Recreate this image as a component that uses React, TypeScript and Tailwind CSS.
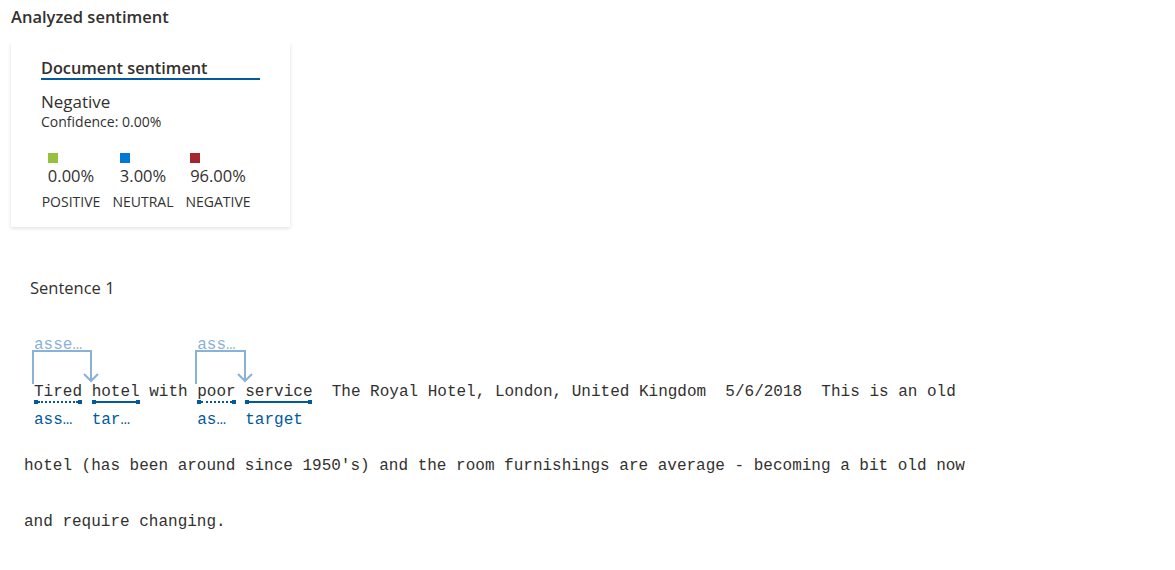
import React from "react";

type Tok = {
  text: string;
  top?: string;
  bottom?: string;
  line?: "solid" | "dotted";
};

const tokens: Tok[] = [
  { text: "Tired", top: "asse…", bottom: "ass…", line: "dotted" },
  { text: " " },
  { text: "hotel", bottom: "tar…", line: "solid" },
  { text: " with " },
  { text: "poor", top: "ass…", bottom: "as…", line: "dotted" },
  { text: " " },
  { text: "service", bottom: "target", line: "solid" },
  { text: "  The Royal Hotel, London, United Kingdom  5/6/2018  This is an old" },
];

function Token({ t }: { t: Tok }) {
  return (
    <div className="flex flex-col whitespace-pre">
      <div className="h-[20px] leading-[20px] text-[#8ab1d6]">{t.top ?? ""}</div>
      <div className="h-[27px]" />
      <div className="h-[19px] leading-[20px] text-[#323130]">{t.text}</div>
      <div className="h-[2px] flex items-center">
        {t.line ? (
          <>
            <div className="w-[4px] h-[4px] bg-[#005a9e] shrink-0" />
            {t.line === "solid" ? (
              <div className="flex-1 h-[2px] bg-[#005a9e]" />
            ) : (
              <div className="flex-1 h-[2px] border-t-2 border-dotted border-[#005a9e]" />
            )}
            <div className="w-[4px] h-[4px] bg-[#005a9e] shrink-0" />
          </>
        ) : null}
      </div>
      <div className="h-[7px]" />
      <div className="h-[20px] leading-[20px] text-[#005a9e]">{t.bottom ?? ""}</div>
    </div>
  );
}

function Arrow({ x1, x2 }: { x1: number; x2: number }) {
  return (
    <g fill="none" stroke="#8ab1d6" strokeWidth="2">
      <path d={`M${x1} 49 V16 H${x2} V46`} />
      <path d={`M${x2 - 7} 39 L${x2} 46 L${x2 + 7} 39`} />
    </g>
  );
}

export default function App() {
  return (
    <div className="w-[1175px] min-h-[570px] bg-white text-[#323130] font-['Open_Sans',sans-serif]">
      <div className="px-[11px] pt-[6px]">
        <h2 className="text-[16.5px] font-semibold leading-[22px]">Analyzed sentiment</h2>
        <div className="mt-[14px] w-[279px] h-[185px] bg-white shadow-[0_1.6px_3.6px_rgba(0,0,0,0.13),0_0.3px_0.9px_rgba(0,0,0,0.11)] pl-[30px] pt-[16px]">
          <div className="w-[219px] border-b-2 border-[#005a9e] text-[16.3px] font-semibold leading-[20px] whitespace-nowrap">
            Document sentiment
          </div>
          <div className="mt-[11px] text-[17px] leading-[22px]">Negative</div>
          <div className="text-[14px] leading-[18px]">Confidence: 0.00%</div>
          <div className="mt-[22px] flex gap-[11px]">
            {[
              { c: "bg-[#95c13e]", v: "0.00%", l: "POSITIVE", w: "w-[60px]" },
              { c: "bg-[#0078d4]", v: "3.00%", l: "NEUTRAL", w: "w-[62px]" },
              { c: "bg-[#a4262c]", v: "96.00%", l: "NEGATIVE", w: "w-[66px]" },
            ].map((s) => (
              <div key={s.l} className={`${s.w} flex flex-col items-center`}>
                <div className="flex flex-col items-start">
                  <div className={`w-[10px] h-[10px] ${s.c}`} />
                  <div className="mt-[2px] text-[16.5px] leading-[22px]">{s.v}</div>
                </div>
                <div className="mt-[7px] text-[14px] leading-[16px] whitespace-nowrap">{s.l}</div>
              </div>
            ))}
          </div>
        </div>
      </div>
      <div className="mt-[50px] pl-[30px] text-[16.5px] leading-[22px]">Sentence 1</div>
      <div className="mt-[36px] pl-[24px] font-['Liberation_Mono',monospace] text-[16px]">
        <div className="relative pl-[10px] flex items-start">
          {tokens.map((t, i) => (
            <Token key={i} t={t} />
          ))}
          <svg className="absolute left-0 top-0 pointer-events-none" width="300" height="60">
            <Arrow x1={9} x2={67} />
            <Arrow x1={172} x2={221} />
          </svg>
        </div>
        <div className="mt-[26px] leading-[20px] whitespace-pre">
          hotel (has been around since 1950's) and the room furnishings are average - becoming a bit old now
        </div>
        <div className="mt-[36px] leading-[20px] whitespace-pre">and require changing.</div>
      </div>
    </div>
  );
}
